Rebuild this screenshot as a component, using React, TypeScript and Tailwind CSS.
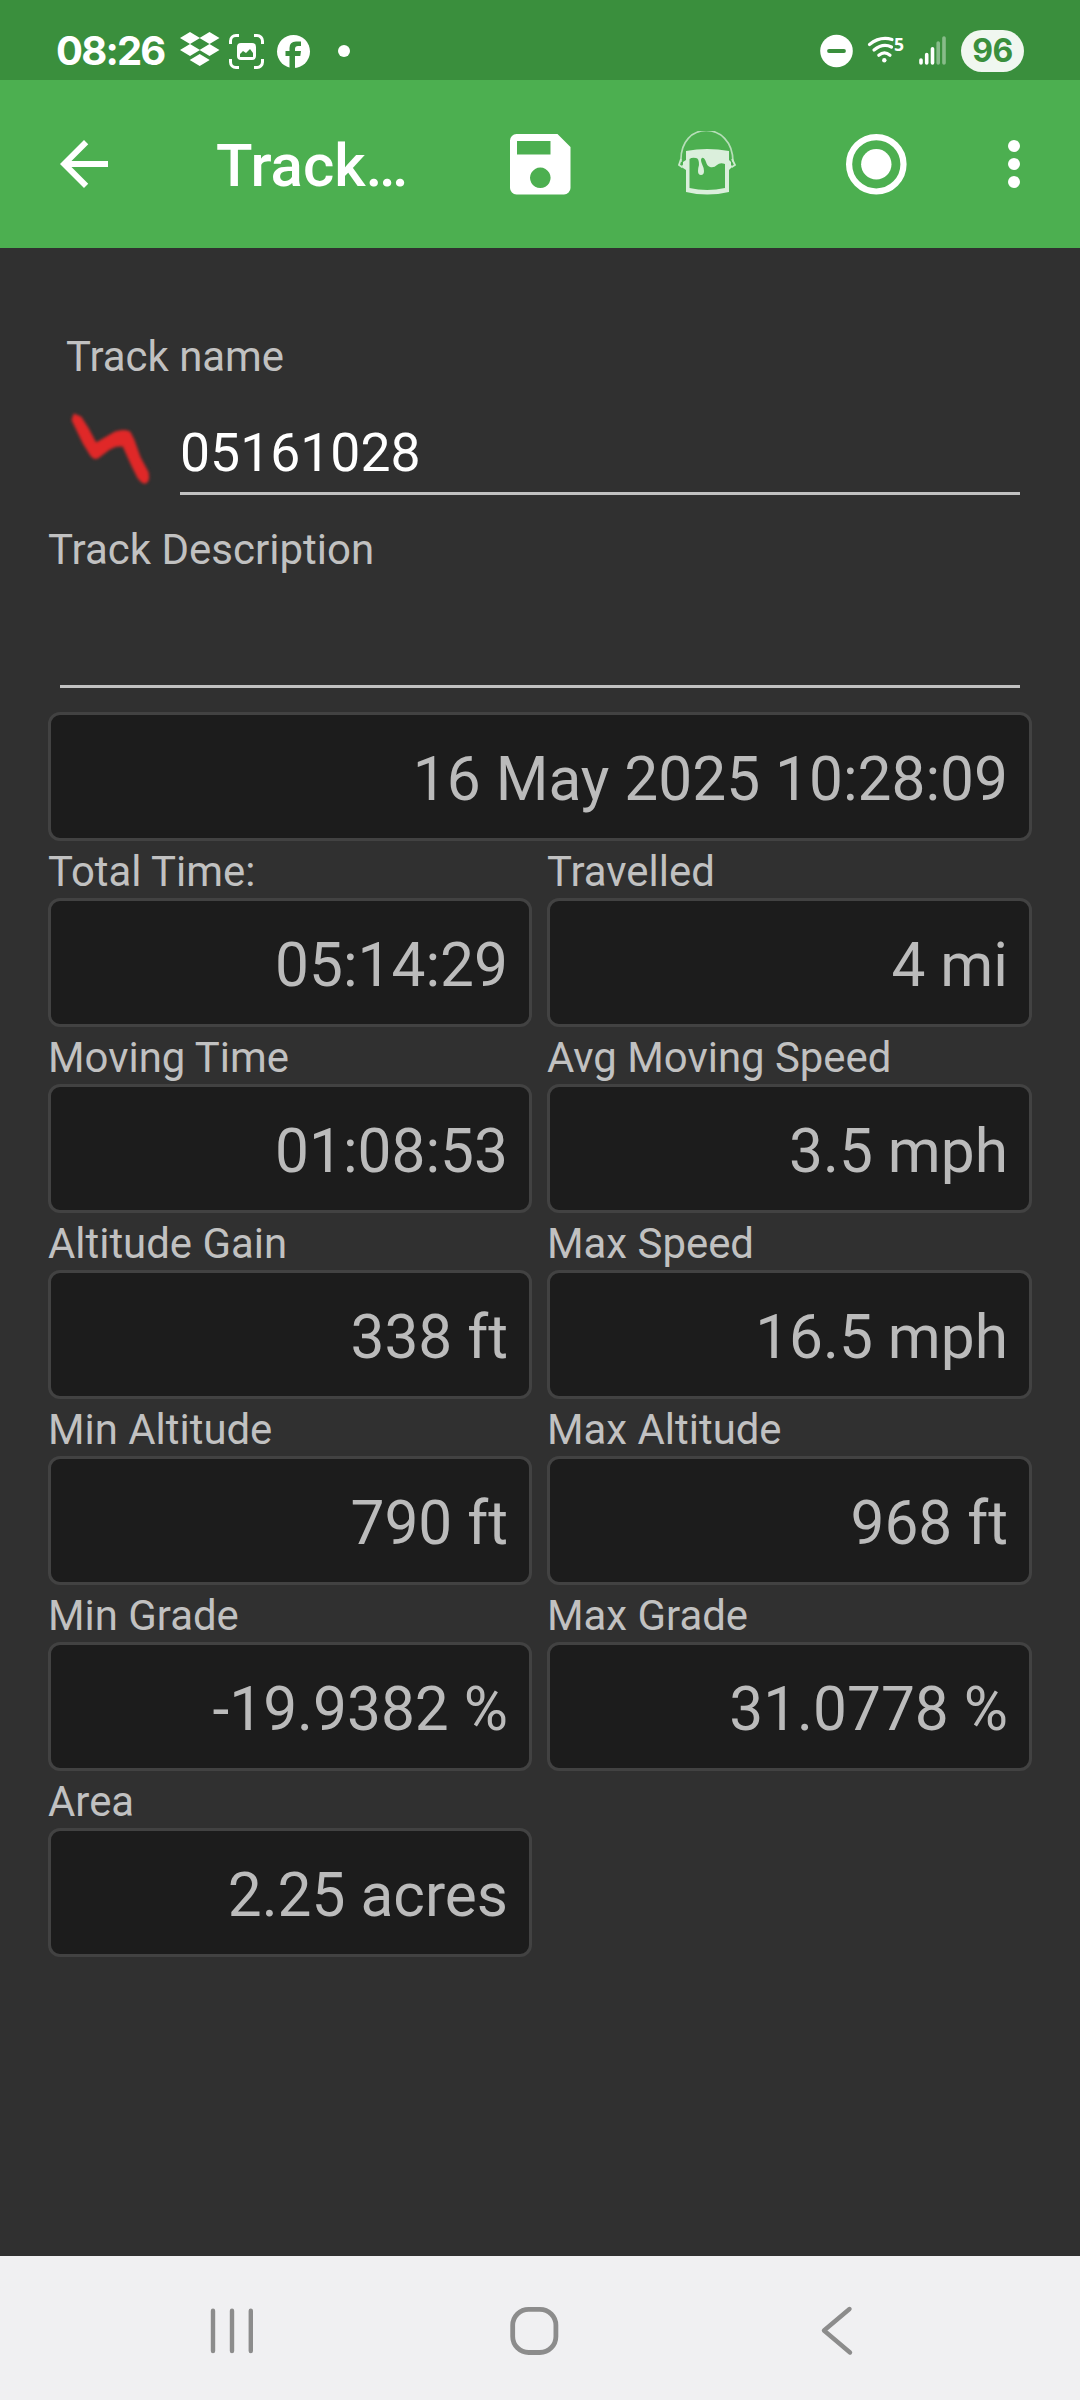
import React from "react";

const StatusIcons = () => (
  <svg className="ml-[16px] h-[40px] w-[172px]" viewBox="179 31 172 40" fill="#fff">
    <path d="M190 32l10 6-10 6-10-6zM209.500 32l10 6-10 6-10-6zM190 44l10 6-10 6-10-6zM209.500 44l10 6-10 6-10-6zM199.700 54l10 6-10 6-10-6z" />
    <path d="M230.500 44v-3a5.500 5.500 0 0 1 5.500-5.500h3M254 35.500h3a5.500 5.500 0 0 1 5.500 5.500v3M262.500 59v3a5.500 5.500 0 0 1-5.500 5.500h-3M239 67.500h-3a5.500 5.500 0 0 1-5.500-5.500v-3" fill="none" stroke="#fff" strokeWidth="3" />
    <path fillRule="evenodd" d="M241 43h11a4 4 0 0 1 4 4v9a4 4 0 0 1-4 4h-11a4 4 0 0 1-4-4v-9a4 4 0 0 1 4-4zM240 57h13v-4l-3-4-4 4-3-2-3 3z" />
    <circle cx="293.500" cy="51.500" r="16.500" />
    <path d="M289.500 69V56h-4v-5h4v-3q0-6.500 6.500-6.500h5v4.500h-3q-3 0-3 3v2h6l-.7 5H295v13z" fill="#3a8f3d" />
    <circle cx="344" cy="51" r="6" />
  </svg>
);

const SystemIcons = () => (
  <svg className="h-[40px] w-[128px]" viewBox="820 31 128 40" fill="none">
    <circle cx="836.500" cy="51" r="16.300" fill="#fff" />
    <path d="M829 51h15" stroke="#3a8f3d" strokeWidth="3.800" strokeLinecap="round" />
    <g stroke="#fff" strokeWidth="3.200" strokeLinecap="round">
      <path d="M869.500 44.500Q880 36 892 39.500M874 50Q883 42.500 891.500 47M878.800 55.200Q884.500 50.500 890 55.200" />
    </g>
    <circle cx="884.300" cy="60.300" r="2.200" fill="#fff" />
    <text x="894" y="50.500" fill="#fff" fontSize="17.500" fontWeight="700" fontFamily="Open Sans, sans-serif">5</text>
    <g stroke="#fff" strokeWidth="3.600" strokeLinecap="round">
      <path d="M921 60v3M926.700 54.500V63M932.500 48.800V63" />
      <path d="M938.200 43V63M944 38V63" opacity=".4" />
    </g>
  </svg>
);

const PaintBucket = () => (
  <svg className="h-[66px] w-[62px]" viewBox="676 131 62 66" fill="#dbefdc">
    <path d="M681 162C679 120 733 120 733 162" fill="none" stroke="#b6deb8" strokeWidth="1.700" />
    <path d="M681 159l-2 6 3 2 4-4M732 159l3 6-3 2-4-3" fill="none" stroke="#cdeace" strokeWidth="1.800" />
    <path fillRule="evenodd" d="M686 151Q707 147 729 151V160l2 2v6l-2 2V192Q707 197 686 192V170l-3-2v-6l3-2zM689.500 159V188Q707 192 725 188V164q-5-2-8 1-3 3-7 2-3-1-4-5-2-5-4-4-2 1 0 6 2 4 2 7 0 4-3 4-3 0-3-4 0-3 1-6 0-7-3-7-4-1-6.500 1z" />
  </svg>
);

const rows: [string, string, string?, string?][] = [
  ["Total Time:", "05:14:29", "Travelled", "4 mi"],
  ["Moving Time", "01:08:53", "Avg Moving Speed", "3.5 mph"],
  ["Altitude Gain", "338 ft", "Max Speed", "16.5 mph"],
  ["Min Altitude", "790 ft", "Max Altitude", "968 ft"],
  ["Min Grade", "-19.9382 %", "Max Grade", "31.0778 %"],
  ["Area", "2.25 acres"],
];

const ValueBox = ({ value }: { value: string }) => (
  <div className="h-[129px] rounded-[12px] border-[3px] border-[#424242] bg-[#1c1c1c] pr-[21px] pt-[30px] text-right text-[60.4px] leading-[70px] text-[#bbbbbb]">
    {value}
  </div>
);

const Stat = ({ label, value }: { label: string; value: string }) => (
  <div>
    <div className="h-[57px] pt-[6px] text-[41.9px] leading-[50px] text-[#c1c1c1]">{label}</div>
    <ValueBox value={value} />
  </div>
);

export default function App() {
  return (
    <div className="flex h-[2400px] w-[1080px] flex-col overflow-hidden whitespace-nowrap bg-[#303030] font-['Roboto',sans-serif]">
      <div className="flex h-[80px] shrink-0 items-center bg-[#3a8f3d] pl-[56px] pr-[56px] pt-[22px] font-['Inter',sans-serif]">
        <span className="w-[107px] text-[40px] font-[650] leading-[48px] tracking-[-1.8px] text-white">08:26</span>
        <StatusIcons />
        <div className="ml-auto flex items-center">
          <SystemIcons />
          <span className="ml-[13px] flex h-[42px] w-[63px] items-center justify-center rounded-full bg-[#f0f7f0] text-[32px] font-bold leading-none tracking-[-0.5px] text-[#3a8f3d]">
            96
          </span>
        </div>
      </div>

      <header className="flex h-[168px] shrink-0 items-center bg-[#4caf50] text-white">
        <svg className="ml-[48px] h-[72px] w-[72px]" viewBox="0 0 24 24" fill="currentColor">
          <path d="M20 11H7.830l5.590-5.590L12 4l-8 8 8 8 1.410-1.410L7.830 13H20v-2z" />
        </svg>
        <h1 className="ml-[96px] w-[210px] pt-[3px] text-[60px] font-medium leading-[72px]">Track…</h1>
        <svg className="ml-[74px] h-[80px] w-[80px]" viewBox="500 124 80 80" fill="currentColor">
          <path fillRule="evenodd" d="M516 134H557.500L570.500 147V188a6.500 6.500 0 0 1-6.500 6.500H516.500a6.500 6.500 0 0 1-6.500-6.500V140.500a6.500 6.500 0 0 1 6.500-6.500zM517 141V154.500H550.500V141zM540.300 167.500a10.300 10.300 0 1 0 .01 0z" />
        </svg>
        <div className="ml-[96px] flex">
          <PaintBucket />
        </div>
        <svg className="ml-[102px] h-[72px] w-[72px]" viewBox="0 0 72 72">
          <circle cx="36.300" cy="36.300" r="27.200" fill="none" stroke="#fff" strokeWidth="6.200" />
          <circle cx="36.300" cy="36.300" r="15.200" fill="#fff" />
        </svg>
        <svg className="ml-[66px] h-[72px] w-[72px]" viewBox="0 0 24 24" fill="currentColor">
          <circle cx="12" cy="6" r="2" />
          <circle cx="12" cy="12" r="2" />
          <circle cx="12" cy="18" r="2" />
        </svg>
      </header>

      <main className="flex-1 px-[48px] pt-[84px]">
        <div className="pl-[18px] text-[41.9px] leading-[50px] text-[#c1c1c1]">Track name</div>
        <div className="flex h-[113px] pl-[18px] pr-[12px]">
          <svg className="mr-[14px] mt-[21px] h-[90px] w-[100px] blur-[1.5px]" viewBox="66 403 100 90">
            <path
              d="M74 414L81 417L88 428L96 443L115 432Q125 429 130 432L134 440L140 457L148 472Q150 481 146 483Q142 484 138 478L132 466L123 446Q116 445 110 449L98 458Q94 460 91 456L83 443L72 420Z"
              fill="#e02828"
              stroke="#e02828"
              strokeWidth="1"
              strokeLinejoin="round"
            />
          </svg>
          <div className="flex-1 border-b-[3px] border-[#c1c1c1] pt-[39px] text-[53.5px] leading-[64px] text-white">05161028</div>
        </div>
        <div className="h-[190px] pt-[30px] text-[42px] leading-[50px] text-[#c1c1c1]">Track Description</div>
        <div className="mx-[12px] mb-[24px] h-[3px] bg-[#c1c1c1]" />
        <ValueBox value="16 May 2025 10:28:09" />
        <div className="grid grid-cols-[484px_485px] gap-x-[15px]">
          {rows.map(([l1, v1, l2, v2]) => (
            <React.Fragment key={l1}>
              <Stat label={l1} value={v1} />
              {l2 && v2 ? <Stat label={l2} value={v2} /> : null}
            </React.Fragment>
          ))}
        </div>
      </main>

      <nav className="flex h-[144px] shrink-0 items-center justify-between bg-[#f0f0f2] pl-[196px] pr-[207px] pt-[6px]">
        <svg className="h-[72px] w-[72px]" viewBox="0 0 72 72" stroke="#8c8c8c" strokeWidth="4.400" strokeLinecap="round">
          <path d="M17 15.700V56M36 15.700V56M54.800 15.700V56" />
        </svg>
        <svg className="h-[72px] w-[72px]" viewBox="0 0 72 72" fill="none" stroke="#8c8c8c" strokeWidth="4.800">
          <rect x="13.700" y="14.300" width="43.200" height="43.200" rx="16" />
        </svg>
        <svg className="h-[72px] w-[72px]" viewBox="0 0 72 72" fill="none" stroke="#8c8c8c" strokeWidth="4.400" strokeLinecap="round" strokeLinejoin="round">
          <path d="M48.500 14L23 35.500L49 57.500" />
        </svg>
      </nav>
    </div>
  );
}
